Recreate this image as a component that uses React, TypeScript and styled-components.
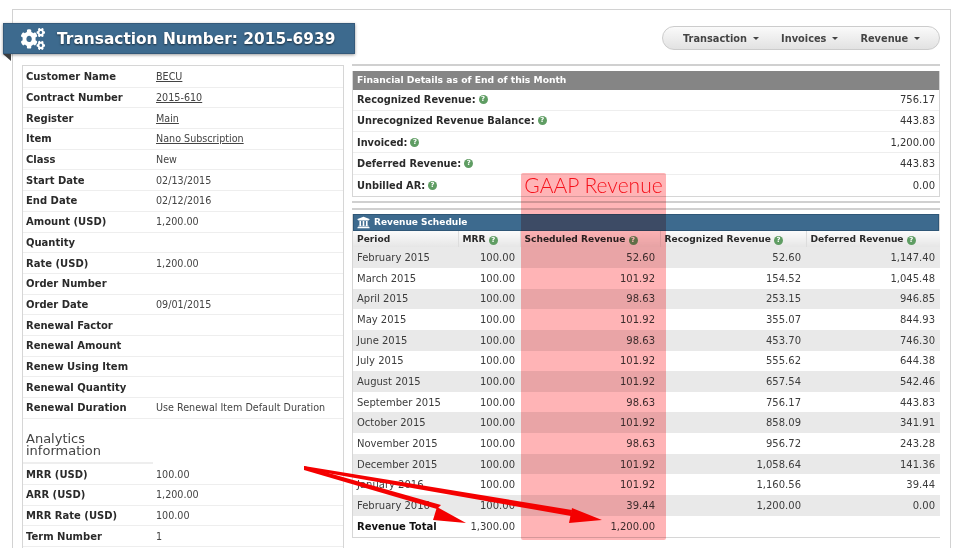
import React from "react";
import styled, { createGlobalStyle } from "styled-components";
import { FaCogs, FaUniversity } from "react-icons/fa";

const Global = createGlobalStyle`
  html, body { margin: 0; padding: 0; background: #fff; }
  body { font-family: "DejaVu Sans", Verdana, sans-serif; color: #333; }
`;

const Viewport = styled.div`
  position: relative;
  width: 960px;
  height: 548px;
  overflow: hidden;
  background: #fff;
`;
const Frame = styled.div`
  margin: 9px 9px 0 12px;
  height: 560px;
  border: 1px solid #d2d2d2;
  border-bottom: 0;
  box-sizing: border-box;
  padding: 13px 9px 0 9px;
`;
const TopBar = styled.header`
  display: flex;
  justify-content: space-between;
  align-items: flex-start;
  height: 42px;
`;
const Banner = styled.div`
  position: relative;
  margin-left: -19px;
  width: 352px;
  height: 31px;
  box-sizing: border-box;
  background: #3d6a8e;
  border: 1px solid #34597a;
  box-shadow: 0 1px 3px rgba(0, 0, 0, 0.4);
  display: flex;
  align-items: center;
  padding-left: 17px;
  gap: 12px;
  color: #fff;
  &::after {
    content: "";
    position: absolute;
    left: -1px;
    top: 30px;
    border-top: 7px solid #3c3c3c;
    border-left: 8px solid transparent;
  }
`;
const BannerIcon = styled(FaCogs)`
  width: 24px;
  height: 22px;
  flex: none;
`;
const BannerTitle = styled.h1`
  margin: 0;
  font-size: 15.4px;
  font-weight: 700;
  white-space: nowrap;
  text-shadow: 0 1px 2px rgba(0, 0, 0, 0.6);
`;
const NavPill = styled.nav`
  display: flex;
  align-items: center;
  gap: 22px;
  width: 278px;
  height: 24px;
  box-sizing: border-box;
  margin: 3px 1px 0 0;
  padding-left: 20px;
  border: 1px solid #ccc;
  border-radius: 12px;
  background: linear-gradient(#fafafa, #e2e2e2);
`;
const NavItem = styled.span`
  display: inline-flex;
  align-items: center;
  gap: 6px;
  font-size: 9.8px;
  font-weight: 700;
  color: #444;
  &::after {
    content: "";
    border-top: 3px solid #444;
    border-left: 3px solid transparent;
    border-right: 3px solid transparent;
  }
`;
const Columns = styled.div`
  display: flex;
  gap: 8px;
  align-items: flex-start;
`;
const LeftPanel = styled.section`
  width: 322px;
  height: 500px;
  box-sizing: border-box;
  border: 1px solid #d6d6d6;
  padding-top: 1px;
`;
const Field = styled.div`
  display: grid;
  grid-template-columns: 130px 1fr;
  align-items: center;
  height: 20.69px;
  box-sizing: border-box;
  padding-left: 3px;
  border-bottom: 1px solid #eeeeee;
  font-size: 9.6px;
`;
const FieldLabel = styled.span`
  font-size: 10px;
  font-weight: 700;
  color: #2a2a2a;
  white-space: nowrap;
`;
const FieldValue = styled.span`
  color: #444;
  white-space: nowrap;
`;
const FieldLink = styled.a`
  color: #444;
  text-decoration: underline;
`;
const SectionHead = styled.h3`
  margin: 0;
  height: 45.5px;
  width: 130px;
  box-sizing: border-box;
  padding: 14px 0 0 3px;
  font-size: 13px;
  line-height: 12px;
  font-weight: 400;
  color: #444;
  border-bottom: 2px solid #eee;
`;
const RightColumn = styled.div`
  width: 588px;
  margin-top: -1px;
  border-top: 2px solid #d0d0d0;
  padding-top: 5px;
`;
const Details = styled.section`
  border: 1px solid #d6d6d6;
  border-top: 0;
`;
const GreyHead = styled.div`
  height: 18.6px;
  box-sizing: border-box;
  padding: 0 0 1px 4px;
  background: #858585;
  color: #fff;
  font-size: 9.2px;
  font-weight: 700;
  display: flex;
  align-items: center;
`;
const DetailRow = styled.div`
  display: flex;
  justify-content: space-between;
  align-items: center;
  height: 21.25px;
  box-sizing: border-box;
  padding: 0 4px;
  border-bottom: 1px solid #eee;
  font-size: 10px;
  &:last-child { border-bottom: 0; }
`;
const DetailLabel = styled.span`
  display: inline-flex;
  align-items: center;
  gap: 3px;
  font-size: 9.8px;
  font-weight: 700;
  color: #2a2a2a;
`;
const Help = styled.span`
  display: inline-flex;
  align-items: center;
  justify-content: center;
  width: 9px;
  height: 9px;
  border-radius: 50%;
  background: #5f9d63;
  color: #fff;
  font-size: 7px;
  font-weight: 700;
  line-height: 9px;
  vertical-align: 0;
`;
const Rule = styled.div<{ $top: number }>`
  height: 2px;
  background: #d0d0d0;
  margin-top: ${(p) => p.$top}px;
`;
const Schedule = styled.section`
  margin-top: 4px;
  border: 1px solid #d6d6d6;
  border-top: 0;
  height: 323px;
`;
const BlueHead = styled.div`
  height: 17px;
  box-sizing: border-box;
  background: #3d6a8e;
  border: 1px solid #2f5777;
  color: #fff;
  font-size: 9px;
  font-weight: 700;
  display: flex;
  align-items: center;
  gap: 4px;
  padding-left: 3px;
`;
const Table = styled.table`
  width: 587px;
  table-layout: fixed;
  border-collapse: collapse;
  font-size: 10px;
`;
const Th = styled.th`
  height: 16.4px;
  padding: 0 0 0 4px;
  text-align: left;
  font-size: 9.1px;
  font-weight: 700;
  color: #2a2a2a;
  white-space: nowrap;
  background: linear-gradient(#fbfbfb, #e6e6e6);
  border-right: 1px solid #ddd;
  &:last-child { border-right: 0; }
`;
const Tr = styled.tr<{ $odd: boolean }>`
  background: ${(p) => (p.$odd ? "#e9e9e9" : "#fff")};
`;
const Td = styled.td`
  height: 20.67px;
  padding: 0 5px 0 0;
  text-align: right;
  color: #3c3c3c;
  &:first-child { text-align: left; padding: 0 0 0 4px; }
`;
const TotalLabel = styled.td`
  height: 21.5px;
  padding: 0 0 0 4px;
  font-size: 10px;
  font-weight: 700;
  color: #111;
`;
const Highlight = styled.div`
  position: absolute;
  left: 521px;
  top: 173px;
  width: 145px;
  height: 367px;
  background: #ffb4b6;
  mix-blend-mode: multiply;
  border-radius: 2px;
`;
const HighlightTitle = styled.div`
  text-align: center;
  font-family: Lato, sans-serif;
  font-weight: 300;
  font-size: 21px;
  line-height: 24px;
  color: #f5101a;
  white-space: nowrap;
`;
const Arrows = styled.svg`
  position: absolute;
  left: 0;
  top: 0;
  pointer-events: none;
`;

const fields: [string, string, boolean?][] = [
  ["Customer Name", "BECU", true],
  ["Contract Number", "2015-610", true],
  ["Register", "Main", true],
  ["Item", "Nano Subscription", true],
  ["Class", "New"],
  ["Start Date", "02/13/2015"],
  ["End Date", "02/12/2016"],
  ["Amount (USD)", "1,200.00"],
  ["Quantity", ""],
  ["Rate (USD)", "1,200.00"],
  ["Order Number", ""],
  ["Order Date", "09/01/2015"],
  ["Renewal Factor", ""],
  ["Renewal Amount", ""],
  ["Renew Using Item", ""],
  ["Renewal Quantity", ""],
  ["Renewal Duration", "Use Renewal Item Default Duration"],
];
const analytics: [string, string][] = [
  ["MRR (USD)", "100.00"],
  ["ARR (USD)", "1,200.00"],
  ["MRR Rate (USD)", "100.00"],
  ["Term Number", "1"],
];
const details: [string, string][] = [
  ["Recognized Revenue:", "756.17"],
  ["Unrecognized Revenue Balance:", "443.83"],
  ["Invoiced:", "1,200.00"],
  ["Deferred Revenue:", "443.83"],
  ["Unbilled AR:", "0.00"],
];
const rows: string[][] = [
  ["February 2015", "100.00", "52.60", "52.60", "1,147.40"],
  ["March 2015", "100.00", "101.92", "154.52", "1,045.48"],
  ["April 2015", "100.00", "98.63", "253.15", "946.85"],
  ["May 2015", "100.00", "101.92", "355.07", "844.93"],
  ["June 2015", "100.00", "98.63", "453.70", "746.30"],
  ["July 2015", "100.00", "101.92", "555.62", "644.38"],
  ["August 2015", "100.00", "101.92", "657.54", "542.46"],
  ["September 2015", "100.00", "98.63", "756.17", "443.83"],
  ["October 2015", "100.00", "101.92", "858.09", "341.91"],
  ["November 2015", "100.00", "98.63", "956.72", "243.28"],
  ["December 2015", "100.00", "101.92", "1,058.64", "141.36"],
  ["January 2016", "100.00", "101.92", "1,160.56", "39.44"],
  ["February 2016", "100.00", "39.44", "1,200.00", "0.00"],
];

const FieldRow = ({ f }: { f: [string, string, boolean?] }) => (
  <Field>
    <FieldLabel>{f[0]}</FieldLabel>
    {f[2] ? <FieldValue><FieldLink>{f[1]}</FieldLink></FieldValue> : <FieldValue>{f[1]}</FieldValue>}
  </Field>
);

export default function App() {
  return (
    <Viewport>
      <Global />
      <Frame>
        <TopBar>
          <Banner>
            <BannerIcon preserveAspectRatio="none" />
            <BannerTitle>Transaction Number: 2015-6939</BannerTitle>
          </Banner>
          <NavPill>
            <NavItem>Transaction</NavItem>
            <NavItem>Invoices</NavItem>
            <NavItem>Revenue</NavItem>
          </NavPill>
        </TopBar>
        <Columns>
          <LeftPanel>
            {fields.map((f) => <FieldRow key={f[0]} f={f} />)}
            <SectionHead>Analytics information</SectionHead>
            {analytics.map((f) => <FieldRow key={f[0]} f={f} />)}
          </LeftPanel>
          <RightColumn>
            <Details>
              <GreyHead>Financial Details as of End of this Month</GreyHead>
              {details.map(([l, v]) => (
                <DetailRow key={l}>
                  <DetailLabel>{l}<Help>?</Help></DetailLabel>
                  <span>{v}</span>
                </DetailRow>
              ))}
            </Details>
            <Rule $top={4} />
            <Rule $top={5} />
            <Schedule>
              <BlueHead><FaUniversity size={13} />Revenue Schedule</BlueHead>
              <Table>
                <colgroup>
                  <col width={105} />
                  <col width={62} />
                  <col width={140} />
                  <col width={146} />
                  <col width={134} />
                </colgroup>
                <thead>
                  <tr>
                    <Th>Period</Th>
                    <Th>MRR <Help>?</Help></Th>
                    <Th>Scheduled Revenue <Help>?</Help></Th>
                    <Th>Recognized Revenue <Help>?</Help></Th>
                    <Th>Deferred Revenue <Help>?</Help></Th>
                  </tr>
                </thead>
                <tbody>
                  {rows.map((r, i) => (
                    <Tr key={r[0]} $odd={i % 2 === 0}>
                      {r.map((c, j) => <Td key={j}>{c}</Td>)}
                    </Tr>
                  ))}
                  <Tr $odd={false}>
                    <TotalLabel>Revenue Total</TotalLabel>
                    <Td>1,300.00</Td>
                    <Td>1,200.00</Td>
                    <Td />
                    <Td />
                  </Tr>
                </tbody>
              </Table>
            </Schedule>
          </RightColumn>
        </Columns>
      </Frame>
      <Highlight>
        <HighlightTitle>GAAP Revenue</HighlightTitle>
      </Highlight>
      <Arrows width={960} height={548} viewBox="0 0 960 548">
        <g fill="#f40000">
          <polygon points="304,466 441,505 437,509 304,470" />
          <polygon points="304,466 572,510 571,516 304,469" />
          <polygon points="437,507 466,523 433,520" />
          <polygon points="572,508 602,520 569,523" />
        </g>
      </Arrows>
    </Viewport>
  );
}
